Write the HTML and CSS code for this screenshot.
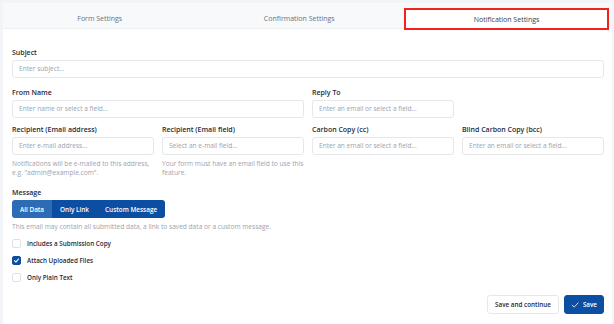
FILE: index.html
```html
<!DOCTYPE html>
<html lang="en">
<head>
  <meta charset="UTF-8">
  <title>Notification Settings</title>
  <link rel="stylesheet" href="styles.css">
</head>
<body>
  <div class="card">
    <!-- Tabs -->
    <div class="tabs">
      <div class="tab">Form Settings</div>
      <div class="tab">Confirmation Settings</div>
      <div class="tab active">Notification Settings</div>
    </div>

    <div class="content">
      <div class="field full">
        <label>Subject</label>
        <div class="input">Enter subject...</div>
      </div>

      <div class="grid">
        <div class="field span2">
          <label>From Name</label>
          <div class="input">Enter name or select a field...</div>
        </div>
        <div class="field">
          <label>Reply To</label>
          <div class="input">Enter an email or select a field...</div>
        </div>
        <div></div>

        <div class="field">
          <label>Recipient (Email address)</label>
          <div class="input">Enter e-mail address...</div>
          <p class="help">Notifications will be e-mailed to this address, e.g. "admin@example.com".</p>
        </div>
        <div class="field">
          <label>Recipient (Email field)</label>
          <div class="input">Select an e-mail field...</div>
          <p class="help">Your form must have an email field to use this feature.</p>
        </div>
        <div class="field">
          <label>Carbon Copy (cc)</label>
          <div class="input">Enter an email or select a field...</div>
        </div>
        <div class="field">
          <label>Blind Carbon Copy (bcc)</label>
          <div class="input">Enter an email or select a field...</div>
        </div>
      </div>

      <div class="field message">
        <label>Message</label>
        <div class="btn-group">
          <button class="seg active">All Data</button>
          <button class="seg">Only Link</button>
          <button class="seg">Custom Message</button>
        </div>
        <p class="help">This email may contain all submitted data, a link to saved data or a custom message.</p>
      </div>

      <div class="checks">
        <div class="check"><span class="box"></span>Includes a Submission Copy</div>
        <div class="check"><span class="box checked">
          <svg viewBox="0 0 10 10" width="7" height="7"><path d="M2 5.2 L4.2 7.2 L8 2.8" fill="none" stroke="#fff" stroke-width="1.5" stroke-linecap="round" stroke-linejoin="round"/></svg>
        </span>Attach Uploaded Files</div>
        <div class="check"><span class="box"></span>Only Plain Text</div>
      </div>

      <div class="actions">
        <button class="btn btn-light">Save and continue</button>
        <button class="btn btn-primary">
          <svg viewBox="0 0 10 10" width="8" height="8"><path d="M1.5 5.3 L4 7.6 L8.8 2.4" fill="none" stroke="#fff" stroke-width="1" stroke-linecap="round" stroke-linejoin="round"/></svg>
          Save
        </button>
      </div>
    </div>
  </div>
</body>
</html>
```

FILE: styles.css
```css
* {
  box-sizing: border-box;
  margin: 0;
  padding: 0;
}

body {
  font-family: 'Open Sans', sans-serif;
  background: #f3f4f7;
  color: #1f2937;
  padding: 3px 2px 0 3px;
}

.card {
  background: #fff;
  height: 321px;
}

/* Tabs */
.tabs {
  display: flex;
  background: #f8f9fb;
  height: 26px;
  border-bottom: 1px solid #eef0f3;
}

.tab {
  flex: 1;
  display: flex;
  align-items: center;
  justify-content: center;
  font-size: 7px;
  color: #6b7280;
  padding-top: 6px;
}

.tab:first-child {
  padding-right: 6px;
}

.tab:nth-child(2) {
  padding-right: 8px;
}

.tab.active {
  flex: 0 0 205px;
  background: #fff;
  color: #374151;
  border: 2px solid #f2231c;
  margin-top: 5px;
  margin-right: 3px;
  padding: 0;
  height: 22px;
}

/* Form */
.content {
  padding: 19px 8px 0 9px;
}

.field label {
  display: block;
  font-size: 7px;
  font-weight: 600;
  line-height: 9px;
  margin-bottom: 3px;
  color: #1f2937;
}

.input {
  height: 18px;
  border: 1px solid #e5e7eb;
  border-radius: 3px;
  padding: 0 6px;
  font-size: 6.6px;
  line-height: 16px;
  color: #9ca3af;
  white-space: nowrap;
  overflow: hidden;
}

.grid {
  display: grid;
  grid-template-columns: repeat(4, 1fr);
  column-gap: 8px;
  row-gap: 7px;
  margin-top: 10px;
}

.span2 {
  grid-column: span 2;
}

.help {
  font-size: 6.6px;
  line-height: 9px;
  color: #9ca3af;
  margin-top: 4px;
}

.message {
  margin-top: 11px;
}

.btn-group {
  display: flex;
  width: fit-content;
  border-radius: 3px;
  overflow: hidden;
  height: 18px;
}

.seg {
  border: none;
  background: #0c4ea2;
  color: #fff;
  font-family: inherit;
  font-size: 6.4px;
  font-weight: 600;
  padding: 0 8px;
}

.seg.active {
  background: #2d6cb5;
}

/* Checkboxes */
.checks {
  margin-top: 8px;
  display: flex;
  flex-direction: column;
  gap: 8px;
}

.check {
  display: flex;
  align-items: center;
  gap: 6px;
  font-size: 6.3px;
  font-weight: 600;
  color: #1f2937;
  height: 9px;
}

.box {
  width: 9px;
  height: 9px;
  border: 1px solid #dde1e6;
  border-radius: 2px;
  display: flex;
  align-items: center;
  justify-content: center;
}

.box.checked {
  background: #0c4ea2;
  border-color: #0c4ea2;
}

/* Actions */
.actions {
  display: flex;
  justify-content: flex-end;
  gap: 5px;
  margin-top: 13px;
}

.btn {
  height: 19px;
  border-radius: 3px;
  font-family: inherit;
  font-size: 6.3px;
  font-weight: 600;
  display: flex;
  align-items: center;
  gap: 4px;
}

.btn-light {
  background: #fff;
  border: 1px solid #e5e7eb;
  color: #1f2937;
  padding: 0 7px;
}

.btn-primary {
  background: #0c4ea2;
  border: 1px solid #0c4ea2;
  color: #fff;
  padding: 0 6px;
}
```
